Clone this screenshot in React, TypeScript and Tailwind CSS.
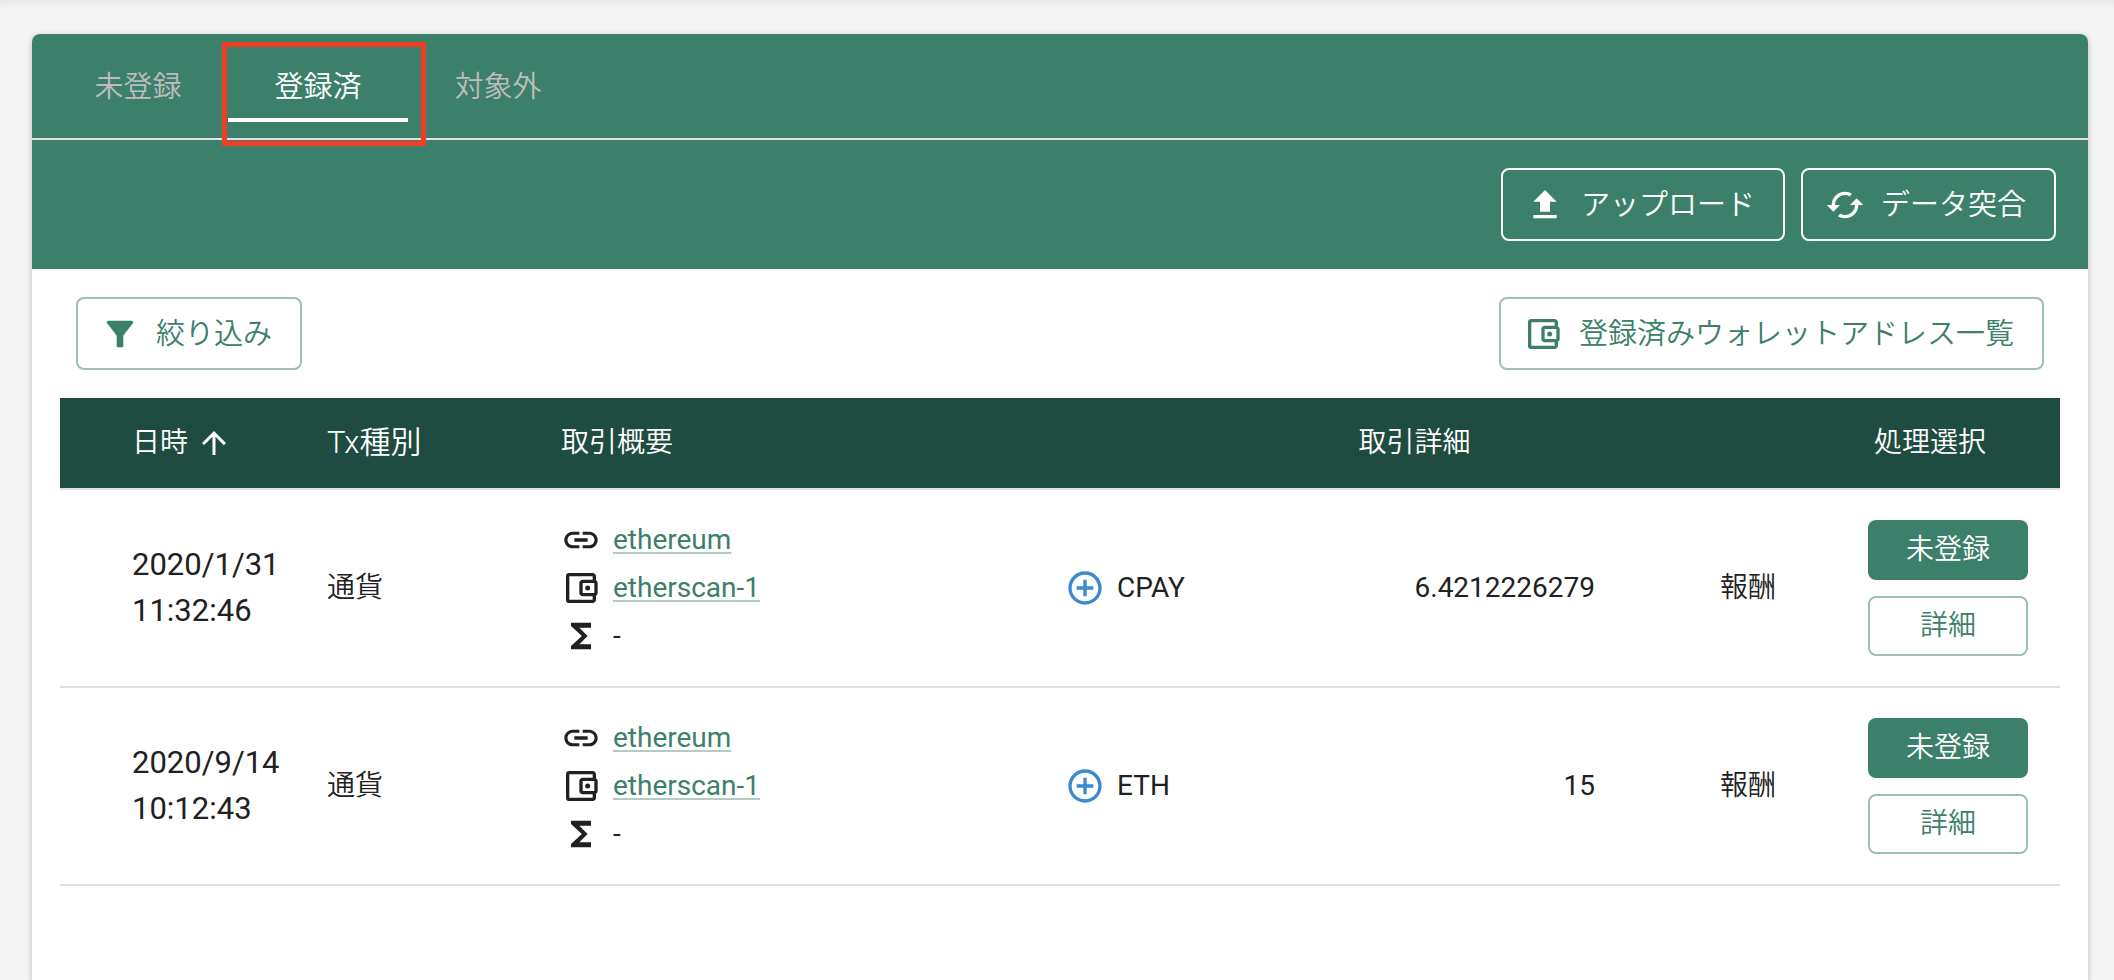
import React, { useState } from 'react';
import { clsx } from 'clsx';
import {
  MdAddCircleOutline,
  MdArrowUpward,
  MdCached,
  MdFilterAlt,
  MdFunctions,
  MdLink,
  MdOutlineAccountBalanceWallet,
} from 'react-icons/md';

type TabKey = 'unregistered' | 'registered' | 'excluded';

interface Transaction {
  id: number;
  date: string;
  time: string;
  txType: string;
  network: string;
  wallet: string;
  total: string;
  currency: string;
  amount: string;
  kind: string;
}

const tabs: { key: TabKey; label: string }[] = [
  { key: 'unregistered', label: '未登録' },
  { key: 'registered', label: '登録済' },
  { key: 'excluded', label: '対象外' },
];

const transactions: Transaction[] = [
  {
    id: 1,
    date: '2020/1/31',
    time: '11:32:46',
    txType: '通貨',
    network: 'ethereum',
    wallet: 'etherscan-1',
    total: '-',
    currency: 'CPAY',
    amount: '6.4212226279',
    kind: '報酬',
  },
  {
    id: 2,
    date: '2020/9/14',
    time: '10:12:43',
    txType: '通貨',
    network: 'ethereum',
    wallet: 'etherscan-1',
    total: '-',
    currency: 'ETH',
    amount: '15',
    kind: '報酬',
  },
];

const UploadIcon = () => (
  <svg viewBox="0 0 24 24" fill="currentColor" className="size-10" aria-hidden="true">
    <path d="M9 16V10H5L12 3L19 10H15V16H9M5 20V18H19V20H5Z" />
  </svg>
);

interface OutlineButtonProps {
  icon: React.ReactNode;
  children: React.ReactNode;
  inverted?: boolean;
}

const OutlineButton: React.FC<OutlineButtonProps> = ({ icon, children, inverted }) => (
  <button
    type="button"
    className={clsx(
      'flex h-[73px] items-center gap-4 rounded-lg border-2 pl-[22px] pr-7 text-[29px] font-[350]',
      inverted ? 'border-white text-white' : 'border-[#9dbfb5] text-[#3c806b]'
    )}
  >
    {icon}
    <span>{children}</span>
  </button>
);

const SummaryLink = ({ children }: { children: React.ReactNode }) => (
  <a
    href="#"
    className="text-[#3c806b] underline decoration-[#b1ccc4] decoration-2 underline-offset-3"
  >
    {children}
  </a>
);

const TransactionRow = ({ tx }: { tx: Transaction }) => (
  <tr className="border-b-2 border-[#e0e0e0]">
    <td className="pl-[72px] text-[31px] leading-[46px]">
      <div>{tx.date}</div>
      <div>{tx.time}</div>
    </td>
    <td className="px-8 font-[350]">{tx.txType}</td>
    <td className="px-8 py-[26px]">
      <div className="flex h-12 items-center gap-3">
        <MdLink className="size-10" />
        <SummaryLink>{tx.network}</SummaryLink>
      </div>
      <div className="flex h-12 items-center gap-3">
        <MdOutlineAccountBalanceWallet className="size-10" />
        <SummaryLink>{tx.wallet}</SummaryLink>
      </div>
      <div className="flex h-12 items-center gap-3">
        <MdFunctions className="size-10" />
        <span>{tx.total}</span>
      </div>
    </td>
    <td className="pl-9">
      <div className="flex items-center gap-3">
        <MdAddCircleOutline className="size-10 text-[#3b89d0]" />
        <span>{tx.currency}</span>
      </div>
    </td>
    <td className="px-8 text-right">{tx.amount}</td>
    <td className="pr-6 text-right font-[350]">{tx.kind}</td>
    <td className="px-8">
      <div className="flex flex-col items-end gap-4 font-[350]">
        <button type="button" className="h-15 w-40 rounded-lg bg-[#3c806b] text-white">
          未登録
        </button>
        <button
          type="button"
          className="h-15 w-40 rounded-lg border-2 border-[#9dbfb5] text-[#3c806b]"
        >
          詳細
        </button>
      </div>
    </td>
  </tr>
);

export default function App() {
  const [activeTab, setActiveTab] = useState<TabKey>('registered');

  return (
    <div className="flex min-h-screen flex-col bg-[#f4f4f4] pt-[34px] pr-[26px] pl-8 font-[Roboto,'Noto_Sans_CJK_JP',sans-serif] text-[28px] leading-[42px] text-[#212121] shadow-[inset_0_8px_10px_-6px_rgba(0,0,0,0.08)]">
      <main className="flex-1 rounded-t-lg bg-white shadow-[0_2px_6px_rgba(0,0,0,0.25)]">
        <header className="rounded-t-lg bg-[#3c806b]">
          <nav className="flex border-b-2 border-[#e0e0e0] px-4 py-4 font-[350]">
            {tabs.map(({ key, label }) => (
              <button
                key={key}
                type="button"
                onClick={() => setActiveTab(key)}
                className={clsx(
                  'relative h-[72px] w-[180px] border-b-4 pt-1.5 text-[29px]',
                  activeTab === key ? 'border-white text-white' : 'border-transparent text-[#bdbdbd]'
                )}
              >
                {label}
                {key === 'registered' && (
                  <span className="pointer-events-none absolute -top-2 -left-1.5 h-[104px] w-[204px] border-[5px] border-[#ee3f24]" />
                )}
              </button>
            ))}
          </nav>
          <div className="flex justify-end gap-4 px-8 py-7">
            <OutlineButton inverted icon={<UploadIcon />}>
              アップロード
            </OutlineButton>
            <OutlineButton inverted icon={<MdCached className="size-10" />}>
              データ突合
            </OutlineButton>
          </div>
        </header>

        <div className="flex justify-between px-11 py-7">
          <OutlineButton icon={<MdFilterAlt className="size-10" />}>絞り込み</OutlineButton>
          <OutlineButton icon={<MdOutlineAccountBalanceWallet className="size-10" />}>
            登録済みウォレットアドレス一覧
          </OutlineButton>
        </div>

        <div className="px-7">
          <table className="w-full table-fixed">
            <colgroup>
              <col className="w-[235px]" />
              <col className="w-[234px]" />
              <col className="w-1/4" />
              <col />
              <col />
              <col className="w-[173px]" />
              <col className="w-[260px]" />
            </colgroup>
            <thead className="bg-[#1f4c40] text-left text-white">
              <tr className="h-[91px] border-b-2 border-[#e0e0e0]">
                <th className="pl-[72px] font-[350]">
                  <button type="button" className="flex items-center gap-2">
                    日時
                    <MdArrowUpward className="size-9" />
                  </button>
                </th>
                <th className="px-8 text-[31px] font-[350]">Tx種別</th>
                <th className="px-8 font-[350]">取引概要</th>
                <th colSpan={3} className="px-8 text-center font-[350]">
                  取引詳細
                </th>
                <th className="text-center font-[350]">処理選択</th>
              </tr>
            </thead>
            <tbody>
              {transactions.map((tx) => (
                <TransactionRow key={tx.id} tx={tx} />
              ))}
            </tbody>
          </table>
        </div>
      </main>
    </div>
  );
}
